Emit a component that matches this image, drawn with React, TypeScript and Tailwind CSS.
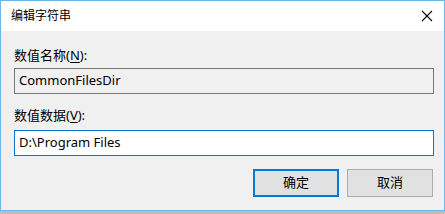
import React from 'react';

const font = { fontFamily: '"Noto Sans", "Noto Sans CJK SC", sans-serif' };

export default function App() {
  return (
    <div className="w-[445px] h-[214px] bg-[#bdbdbd] text-[13px] text-black" style={font}>
      <div className="w-[445px] h-[211px] border border-[#6cb6e8] bg-[#f0f0f0] flex flex-col">
        {/* Title bar */}
        <div className="h-[30px] bg-white flex items-center justify-between pl-[10px] pr-[10px] shrink-0">
          <span className="text-[12px] leading-none">编辑字符串</span>
          <svg width="12" height="12" viewBox="0 0 12 12" className="mr-[1px]">
            <path d="M1 1 L11 11 M11 1 L1 11" stroke="#000" strokeWidth="1.1" />
          </svg>
        </div>

        {/* Body */}
        <div className="flex flex-col px-[13px] pt-[16px]">
          <div className="leading-[16px] h-[16px]">
            数值名称(<span className="underline underline-offset-2">N</span>):
          </div>
          <div className="mt-[5px] h-[26px] border border-[#7a7a7a] bg-[#f0f0f0] flex items-center pl-[4px] w-[420px]">
            CommonFilesDir
          </div>
          <div className="mt-[13px] leading-[16px] h-[16px]">
            数值数据(<span className="underline underline-offset-2">V</span>):
          </div>
          <div className="mt-[7px] h-[26px] border border-[#0078d7] bg-white flex items-center pl-[4px] w-[420px]">
            D:\Program Files
          </div>
          <div className="mt-[13px] flex justify-end gap-[8px] w-[419px]">
            <button className="w-[86px] h-[28px] border-2 border-[#0078d7] bg-[#e1e1e1] flex items-center justify-center">
              确定
            </button>
            <button className="w-[86px] h-[28px] border border-[#adadad] bg-[#e1e1e1] flex items-center justify-center">
              取消
            </button>
          </div>
        </div>
      </div>
    </div>
  );
}
